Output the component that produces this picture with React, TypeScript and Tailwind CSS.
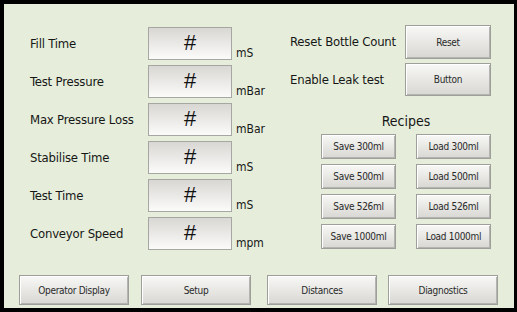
const FIELDS = [
  { label: "Fill Time", unit: "mS" },
  { label: "Test Pressure", unit: "mBar" },
  { label: "Max Pressure Loss", unit: "mBar" },
  { label: "Stabilise Time", unit: "mS" },
  { label: "Test Time", unit: "mS" },
  { label: "Conveyor Speed", unit: "mpm" },
];

const RECIPES = ["300ml", "500ml", "526ml", "1000ml"];

const BTN =
  "flex items-center justify-center border border-[#9e9e9a] bg-gradient-to-b from-[#f8f8f6] to-[#d8d7d3] text-[10px] tracking-[-0.3px] text-[#2a2a2a] shadow-[inset_1px_1px_0_#ffffff,inset_-1px_-1px_0_#b4b4b0]";

function Field({ label, unit }: { label: string; unit: string }) {
  return (
    <div className="flex h-[33px]">
      <span className="w-[118px] self-center text-[13px] tracking-[-0.2px]">{label}</span>
      <div
        className="flex w-[84px] items-center justify-center border border-[#a6a6a2] bg-gradient-to-b from-[#d9d7d3] to-[#fbfbfa] pb-[3px] text-[22px] text-[#111]"
        style={{ fontFamily: '"Liberation Sans", sans-serif' }}
      >
        #
      </div>
      <span className="ml-[4px] self-end text-[12px] leading-[14px]">{unit}</span>
    </div>
  );
}

export default function App() {
  return (
    <div
      className="h-[312px] w-[517px] border-b-4 border-l-4 border-r-[3px] border-t-4 border-black bg-[#e6eedb] text-[#161616] [font-stretch:condensed]"
      style={{ fontFamily: '"DejaVu Sans", sans-serif' }}
    >
      <div className="flex h-full flex-col">
        <div className="flex">
          {/* Parameters */}
          <div className="flex w-[286px] flex-col gap-[5px] pl-[26px] pt-[23px]">
            {FIELDS.map((f) => (
              <Field key={f.label} {...f} />
            ))}
          </div>

          {/* Actions + recipes */}
          <div className="flex flex-col pt-[21px]">
            <div className="flex items-center">
              <span className="w-[115px] text-[13px] tracking-[-0.2px]">Reset Bottle Count</span>
              <button className={`${BTN} h-[34px] w-[86px]`}>Reset</button>
            </div>
            <div className="mt-[4px] flex items-center">
              <span className="w-[115px] text-[13px] tracking-[-0.2px]">Enable Leak test</span>
              <button className={`${BTN} h-[33px] w-[86px]`}>Button</button>
            </div>
            <div className="ml-[31px] mt-[17px] flex w-[170px] flex-col items-center">
              <span className="text-[14px] leading-[17px]">Recipes</span>
              <div className="mt-[4px] grid grid-cols-2 gap-x-[20px] gap-y-[5px]">
                {RECIPES.map((r) => (
                  <div key={r} className="contents">
                    <button className={`${BTN} h-[25px] w-[75px]`}>Save {r}</button>
                    <button className={`${BTN} h-[25px] w-[75px]`}>Load {r}</button>
                  </div>
                ))}
              </div>
            </div>
          </div>
        </div>

        {/* Navigation */}
        <div className="mt-auto mb-[3px] flex pl-[15px]">
          <button className={`${BTN} h-[30px] w-[110px]`}>Operator Display</button>
          <button className={`${BTN} ml-[12px] h-[30px] w-[110px]`}>Setup</button>
          <button className={`${BTN} ml-[16px] h-[30px] w-[110px]`}>Distances</button>
          <button className={`${BTN} ml-[11px] h-[30px] w-[110px]`}>Diagnostics</button>
        </div>
      </div>
    </div>
  );
}
